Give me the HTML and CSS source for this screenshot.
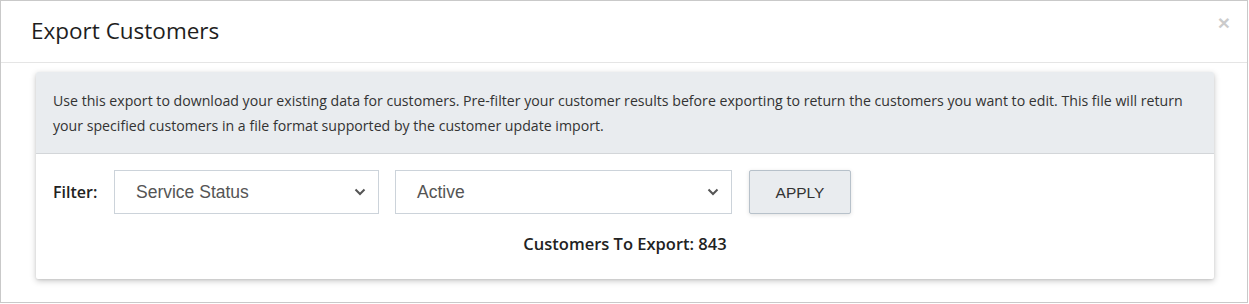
FILE: index.html
```html
<!DOCTYPE html>
<html>
<head>
<meta charset="utf-8">
<link rel="stylesheet" href="styles.css">
</head>
<body>
<div class="modal">
  <div class="modal-header">
    <h4 class="modal-title">Export Customers</h4>
    <button class="close" type="button" aria-label="Close">&times;</button>
  </div>
  <div class="modal-body">
    <div class="card">
      <div class="card-header">
        Use this export to download your existing data for customers. Pre-filter your customer results before exporting to return the customers you want to edit. This file will return your specified customers in a file format supported by the customer update import.
      </div>
      <div class="card-body">
        <div class="filter-row">
          <label class="filter-label">Filter:</label>
          <div class="select select-field">
            <span>Service Status</span>
            <svg class="chev" width="12" height="8" viewBox="0 0 12 8"><path d="M1.5 1.5 L6 6 L10.5 1.5" fill="none" stroke="#555" stroke-width="2"/></svg>
          </div>
          <div class="select select-value">
            <span>Active</span>
            <svg class="chev" width="12" height="8" viewBox="0 0 12 8"><path d="M1.5 1.5 L6 6 L10.5 1.5" fill="none" stroke="#555" stroke-width="2"/></svg>
          </div>
          <button class="btn-apply" type="button">APPLY</button>
        </div>
        <div class="count">Customers To Export: 843</div>
      </div>
    </div>
  </div>
</div>
</body>
</html>
```

FILE: styles.css
```css
* { box-sizing: border-box; }
html, body { margin: 0; padding: 0; background: #fff; }
body { font-family: "Open Sans", "Liberation Sans", sans-serif; color: #333; }

.modal {
  width: 1248px;
  height: 303px;
  border: 1px solid #c9c9c9;
  background: #fff;
}

.modal-header {
  height: 62px;
  border-bottom: 1px solid #e5e5e5;
  display: flex;
  align-items: center;
  justify-content: space-between;
  padding: 0 17px 0 30px;
}
.modal-title {
  margin: 0;
  font-size: 22.5px;
  font-weight: 400;
  color: #1e1e1e;
  margin-top: -2px;
}
.close {
  background: none;
  border: none;
  padding: 0;
  font-family: "Liberation Sans", Arial, sans-serif;
  font-size: 21px;
  font-weight: 700;
  color: #000;
  opacity: 0.2;
  line-height: 1;
  align-self: flex-start;
  margin-top: 11px;
}

.modal-body {
  padding: 9px 33px 0 35px;
}

.card {
  background: #fff;
  border-radius: 2px;
  box-shadow: 0 2px 6px rgba(0,0,0,0.22), 0 1px 2px rgba(0,0,0,0.08);
}
.card-header {
  background: #e9ecef;
  border-bottom: 1px solid #d3d6d9;
  padding: 16px 17px 15px 17px;
  font-size: 14.15px;
  line-height: 25px;
  color: #333;
  border-radius: 2px 2px 0 0;
}

.card-body {
  padding: 16px 17px 24px 17px;
}
.filter-row {
  display: flex;
  align-items: center;
}
.filter-label {
  font-size: 16px;
  font-weight: 600;
  color: #222;
  width: 61px;
}
.select {
  height: 44px;
  border: 1px solid #ccd3da;
  display: flex;
  align-items: center;
  justify-content: space-between;
  padding: 0 12px 0 21px;
  font-family: "Liberation Sans", Arial, sans-serif;
  font-size: 17.5px;
  color: #555;
  background: #fff;
}
.select-field { width: 265px; margin-right: 16px; }
.select-value { width: 337px; margin-right: 17px; }
.chev { flex: none; }

.btn-apply {
  width: 102px;
  height: 44px;
  background: #e9ecef;
  border: 1px solid #b7c1ca;
  border-radius: 2px;
  box-shadow: 0 1px 4px rgba(0,0,0,0.12);
  font-family: "Liberation Sans", Arial, sans-serif;
  font-size: 15.5px;
  color: #333;
  padding: 0;
  padding-top: 1px;
}

.count {
  text-align: center;
  font-size: 16.5px;
  font-weight: 600;
  color: #222;
  margin-top: 19px;
  line-height: 22px;
}
```
